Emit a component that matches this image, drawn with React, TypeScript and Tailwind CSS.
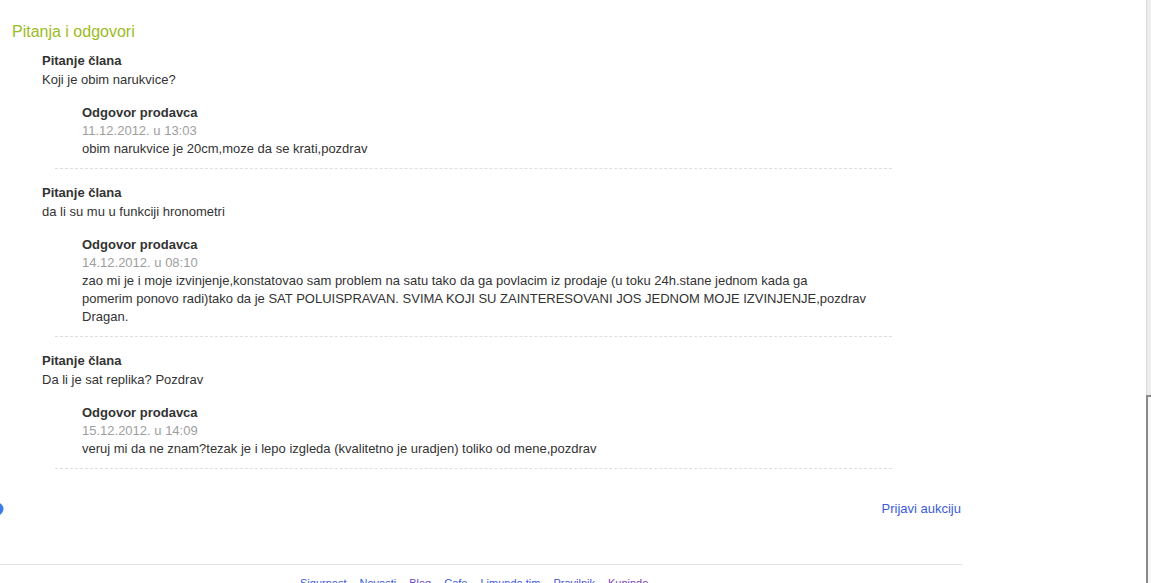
const items = [
  {
    question: "Koji je obim narukvice?",
    date: "11.12.2012. u 13:03",
    answer: ["obim narukvice je 20cm,moze da se krati,pozdrav"],
  },
  {
    question: "da li su mu u funkciji hronometri",
    date: "14.12.2012. u 08:10",
    answer: [
      "zao mi je i moje izvinjenje,konstatovao sam problem na satu tako da ga povlacim iz prodaje (u toku 24h.stane jednom kada ga",
      "pomerim ponovo radi)tako da je SAT POLUISPRAVAN. SVIMA KOJI SU ZAINTERESOVANI JOS JEDNOM MOJE IZVINJENJE,pozdrav",
      "Dragan.",
    ],
  },
  {
    question: "Da li je sat replika? Pozdrav",
    date: "15.12.2012. u 14:09",
    answer: ["veruj mi da ne znam?tezak je i lepo izgleda (kvalitetno je uradjen) toliko od mene,pozdrav"],
  },
];

const footerLinks = [
  { label: "Sigurnost", color: "text-[#3b5bd6]" },
  { label: "Novosti", color: "text-[#3b5bd6]" },
  { label: "Blog", color: "text-[#6a4bc8]" },
  { label: "Cafe", color: "text-[#3b5bd6]" },
  { label: "Limundo tim", color: "text-[#3b5bd6]" },
  { label: "Pravilnik", color: "text-[#4b55cf]" },
  { label: "Kupindo", color: "text-[#7a3fb0]" },
];

export default function App() {
  return (
    <div className="flex h-[583px] w-full overflow-hidden bg-white font-['Liberation_Sans',Arial,sans-serif] text-[13px] text-[#333]">
      {/* PAGE CONTENT */}
      <div className="flex w-[962px] shrink-0 flex-col">
        <h2 className="pl-[12px] pt-[22px] text-[16px] leading-[20px] text-[#9cbb1e]">
          Pitanja i odgovori
        </h2>

        {items.map((item, i) => (
          <div key={i}>
            <div className={`${i === 0 ? "pt-[10px]" : "pt-[15px]"} pb-[10px] pl-[42px]`}>
              <div className="mb-px font-bold leading-[18px]">Pitanje člana</div>
              <div className="leading-[18px]">{item.question}</div>

              <div className="ml-[40px] mt-[15px]">
                <div className="font-bold leading-[18px]">Odgovor prodavca</div>
                <div className="leading-[18px] text-[#9e9e9e]">{item.date}</div>
                {item.answer.map((line, j) => (
                  <div key={j} className="whitespace-nowrap leading-[18px]">
                    {line}
                  </div>
                ))}
              </div>
            </div>
            <div className="ml-[55px] w-[837px] border-t border-dashed border-[#dedede]" />
          </div>
        ))}

        {/* REPORT ROW */}
        <div className="mt-[31px] flex h-[18px] items-center justify-between">
          <svg width="4" height="16" viewBox="0 0 4 16">
            <circle cx="-3" cy="8" r="6.5" fill="#3d7be8" />
          </svg>
          <a className="pr-px leading-[18px] text-[#3b5bd6]">Prijavi aukciju</a>
        </div>

        {/* FOOTER */}
        <div className="mt-[46px] border-t border-[#e2e2e2]">
          <div className="flex gap-[13px] pl-[300px] pt-[11px] text-[11px] leading-[14px]">
            {footerLinks.map((l) => (
              <a key={l.label} className={l.color}>
                {l.label}
              </a>
            ))}
          </div>
        </div>
      </div>

      <div className="flex-1" />

      {/* RIGHT EDGE */}
      <div className="flex w-[5px] shrink-0 flex-col">
        <div className="h-[395px] border-l border-[#dcdcdc] bg-[#ececec]" />
        <div className="flex-1 border-l-2 border-t-2 border-[#8a8a8a] bg-[#f7f7f7]" />
      </div>
    </div>
  );
}
